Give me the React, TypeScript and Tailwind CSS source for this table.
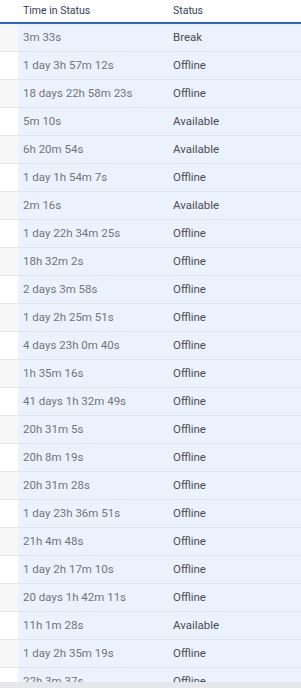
import React from "react";

const rows: [string, string][] = [
  ["3m 33s", "Break"],
  ["1 day 3h 57m 12s", "Offline"],
  ["18 days 22h 58m 23s", "Offline"],
  ["5m 10s", "Available"],
  ["6h 20m 54s", "Available"],
  ["1 day 1h 54m 7s", "Offline"],
  ["2m 16s", "Available"],
  ["1 day 22h 34m 25s", "Offline"],
  ["18h 32m 2s", "Offline"],
  ["2 days 3m 58s", "Offline"],
  ["1 day 2h 25m 51s", "Offline"],
  ["4 days 23h 0m 40s", "Offline"],
  ["1h 35m 16s", "Offline"],
  ["41 days 1h 32m 49s", "Offline"],
  ["20h 31m 5s", "Offline"],
  ["20h 8m 19s", "Offline"],
  ["20h 31m 28s", "Offline"],
  ["1 day 23h 36m 51s", "Offline"],
  ["21h 4m 48s", "Offline"],
  ["1 day 2h 17m 10s", "Offline"],
  ["20 days 1h 42m 11s", "Offline"],
  ["11h 1m 28s", "Available"],
  ["1 day 2h 35m 19s", "Offline"],
  ["22h 3m 37s", "Offline"],
];

export default function App() {
  return (
    <div className="w-[301px] h-[688px] overflow-hidden bg-white flex flex-col" style={{ fontFamily: "Roboto, 'Noto Sans', sans-serif" }}>
      <div className="h-[682px] overflow-hidden flex flex-col shrink-0">
        <div className="flex h-[24px] shrink-0 border-b-2 border-[#2f63c7] bg-white">
          <div className="w-[18px]" />
          <div className="w-[150px] pl-[5px] text-[10.5px] leading-[22px] text-[#34405a]">Time in Status</div>
          <div className="flex-1 pl-[5px] text-[10.5px] leading-[22px] text-[#34405a]">Status</div>
        </div>
        {rows.map(([t, s], i) => (
          <div key={i} className="flex h-[28px] shrink-0 border-b border-[#e2e5eb]">
            <div className={i % 2 === 0 ? "w-[18px] bg-[#f7f7f7]" : "w-[18px] bg-white"} />
            <div className="w-[150px] pl-[5px] bg-[#ecf2fd] text-[11.5px] leading-[27px] text-[#70757a] whitespace-nowrap">{t}</div>
            <div className="flex-1 pl-[5px] bg-[#ecf2fd] text-[11.5px] leading-[27px] text-[#4a4d52] whitespace-nowrap">{s}</div>
          </div>
        ))}
      </div>
      <div className="flex-1 bg-[#e5e7ea]" />
    </div>
  );
}
